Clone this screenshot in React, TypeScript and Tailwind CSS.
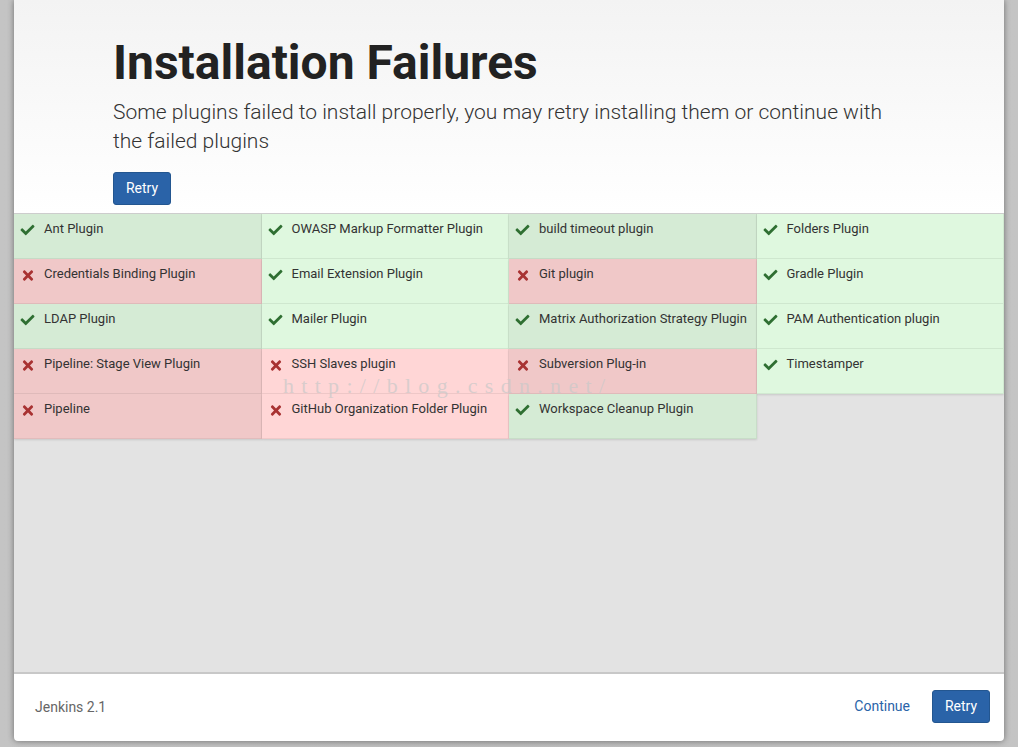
import { FaCheck, FaTimes } from "react-icons/fa";

type Plugin = { name: string; ok: boolean };

const plugins: Plugin[] = [
  { name: "Ant Plugin", ok: true },
  { name: "OWASP Markup Formatter Plugin", ok: true },
  { name: "build timeout plugin", ok: true },
  { name: "Folders Plugin", ok: true },
  { name: "Credentials Binding Plugin", ok: false },
  { name: "Email Extension Plugin", ok: true },
  { name: "Git plugin", ok: false },
  { name: "Gradle Plugin", ok: true },
  { name: "LDAP Plugin", ok: true },
  { name: "Mailer Plugin", ok: true },
  { name: "Matrix Authorization Strategy Plugin", ok: true },
  { name: "PAM Authentication plugin", ok: true },
  { name: "Pipeline: Stage View Plugin", ok: false },
  { name: "SSH Slaves plugin", ok: false },
  { name: "Subversion Plug-in", ok: false },
  { name: "Timestamper", ok: true },
  { name: "Pipeline", ok: false },
  { name: "GitHub Organization Folder Plugin", ok: false },
  { name: "Workspace Cleanup Plugin", ok: true },
];

function cellColor(ok: boolean, odd: boolean) {
  if (ok) return odd ? "bg-[#d5ebd5]" : "bg-[#dff8df]";
  return odd ? "bg-[#f0c8c8]" : "bg-[#ffd6d6]";
}

export default function App() {
  return (
    <div
      className="relative w-[1018px] h-[747px] overflow-hidden bg-gradient-to-r from-[#c4c4c4] via-[#bdbdbd] to-[#c4c4c4]"
      style={{ fontFamily: "Roboto, 'Noto Sans', sans-serif" }}
    >
      <div className="mx-[14px] h-[741px] flex flex-col bg-white rounded-b-[4px] shadow-[0_0_6px_rgba(0,0,0,0.45)] overflow-hidden">
        <div className="h-[213px] shrink-0 pl-[99px] pt-[34px] bg-gradient-to-b from-[#f3f3f3] to-white">
          <h1 className="text-[48px] leading-[58px] font-bold text-[#222]">
            Installation Failures
          </h1>
          <p className="mt-[6px] w-[780px] text-[21px] leading-[29px] font-light text-[#333]">
            Some plugins failed to install properly, you may retry installing them or continue with the failed plugins
          </p>
          <button className="mt-[16px] w-[58px] h-[33px] rounded-[3px] bg-[#2a63a8] border border-[#235690] text-white text-[14px]">
            Retry
          </button>
        </div>

        <div className="relative flex-1 bg-[#e3e3e3] border-t border-[#cfcfcf]">
          <div className="grid grid-cols-4">
            {plugins.map((p, i) => (
              <div
                key={p.name}
                className={`h-[45px] flex items-start pl-[6px] pt-[7px] border-r border-b border-black/[0.06] shadow-[0_1px_2px_rgba(0,0,0,0.12)] ${cellColor(p.ok, i % 2 === 0)}`}
              >
                <span className="w-[24px] pt-[2px] shrink-0 flex">
                  {p.ok ? (
                    <FaCheck className="text-[#2f6f32] w-[15px] h-[14px]" />
                  ) : (
                    <FaTimes className="text-[#a83232] w-[14px] h-[15px] ml-[1px]" />
                  )}
                </span>
                <span className="text-[13px] leading-[16px] text-[#333] whitespace-nowrap">
                  {p.name}
                </span>
              </div>
            ))}
          </div>
          <span
            className="absolute left-[269px] top-[155px] text-[22px] tracking-[7.3px] text-[#c8c8c8]/70 pointer-events-none"
            style={{ fontFamily: "'Liberation Serif', serif" }}
          >
            http://blog.csdn.net/
          </span>
        </div>

        <div className="h-[69px] shrink-0 border-t-2 border-[#c8c8c8] flex items-center pl-[21px] pr-[14px] pb-[3px]">
          <span className="text-[14px] text-[#666] mt-[3px]">Jenkins 2.1</span>
          <div className="ml-auto flex items-center gap-[22px]">
            <button className="text-[14px] text-[#2a63a8]">Continue</button>
            <button className="w-[58px] h-[33px] rounded-[3px] bg-[#2a63a8] border border-[#235690] text-white text-[14px]">
              Retry
            </button>
          </div>
        </div>
      </div>
    </div>
  );
}
